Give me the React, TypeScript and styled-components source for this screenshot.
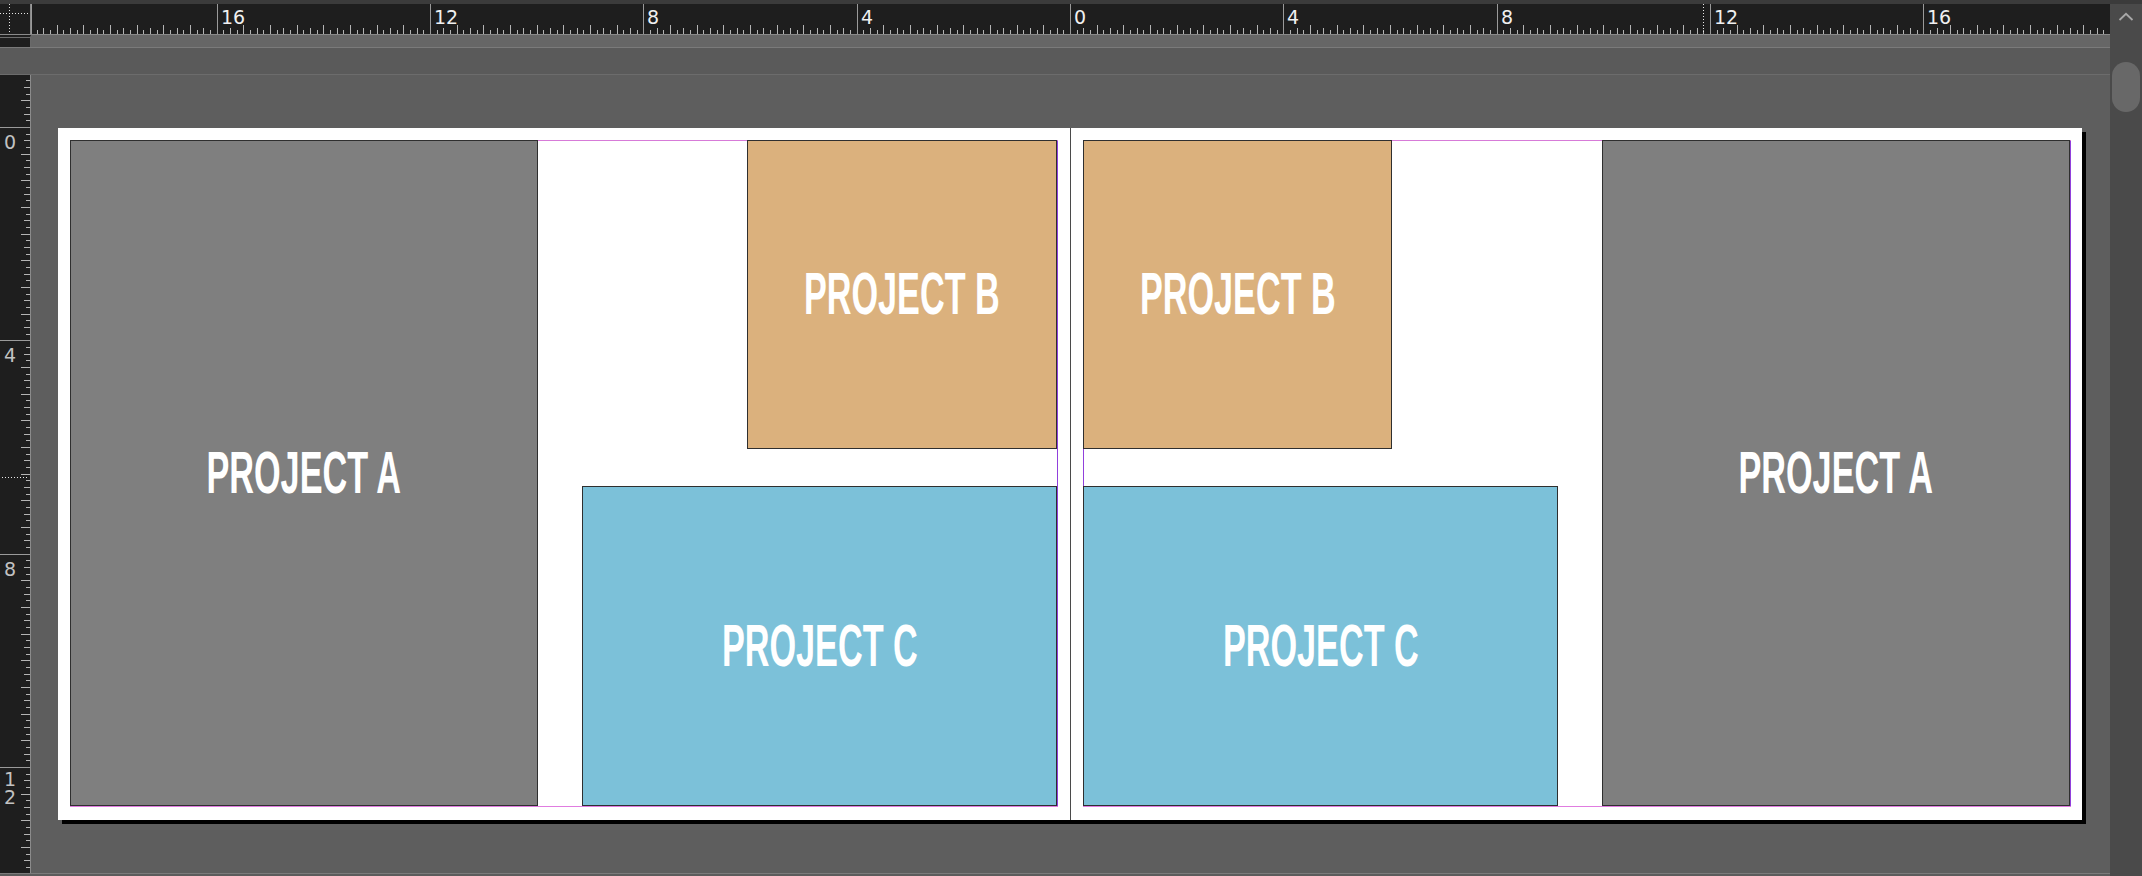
import React from "react";
import styled, { createGlobalStyle } from "styled-components";

const UNIT = 160 / 3;
const EIGHTH = UNIT / 8;
const H_RULER_W = 2079;
const H_ZERO = 1039;
const V_RULER_H = 798;
const V_ZERO = 52;

const GlobalStyle = createGlobalStyle`
  html, body { margin: 0; padding: 0; background: #5e5e5e; overflow: hidden; }
  #root { width: 2142px; height: 876px; }
  * { box-sizing: border-box; }
`;

const Window = styled.div`
  width: 2142px;
  height: 876px;
  display: flex;
  background: #5e5e5e;
  overflow: hidden;
  font-family: "DejaVu Sans", "Liberation Sans", sans-serif;
`;

const Workspace = styled.div`
  width: 2110px;
  height: 876px;
  display: flex;
  flex-direction: column;
`;

const TopStrip = styled.div`
  flex: none;
  height: 4px;
  background: #3b3b3b;
`;

const RulerRow = styled.div`
  flex: none;
  height: 31px;
  display: flex;
  border-bottom: 1px solid #8a8a8a;
`;

const Corner = styled.div`
  position: relative;
  flex: none;
  width: 31px;
  background: #1e1e1e;
  border-right: 1px solid #8a8a8a;
`;

const DotLineV = styled.div`
  position: absolute;
  width: 1px;
  background: repeating-linear-gradient(to bottom, #e8e8e8 0 1px, transparent 1px 3px);
`;

const DotLineH = styled.div`
  position: absolute;
  height: 1px;
  background: repeating-linear-gradient(to right, #e8e8e8 0 1px, transparent 1px 3px);
`;

const HRuler = styled.div`
  position: relative;
  flex: 1;
  background: #1e1e1e;
  overflow: hidden;
`;

const HLabel = styled.span`
  position: absolute;
  top: 4px;
  font-size: 19px;
  line-height: 19px;
  color: #f0f0f0;
  white-space: nowrap;
`;

const InfoStrip = styled.div`
  flex: none;
  height: 13px;
  display: flex;
  border-bottom: 1px solid #7a7a7a;
`;

const InfoCorner = styled.div`
  flex: none;
  width: 31px;
  background: #1e1e1e;
  border-right: 1px solid #6a6a6a;
  border-top: 2px solid #1e1e1e;
  box-shadow: inset 0 1px 0 #6e6e6e;
`;

const InfoFill = styled.div`
  flex: 1;
  background: #666666;
`;

const ToolBand = styled.div`
  flex: none;
  height: 27px;
  background: #5a5a5a;
  border-bottom: 1px solid #6c6c6c;
`;

const Body = styled.div`
  flex: 1;
  display: flex;
  min-height: 0;
`;

const VRuler = styled.div`
  position: relative;
  flex: none;
  width: 31px;
  background: #1e1e1e;
  border-right: 1px solid #8a8a8a;
  overflow: hidden;
`;

const VLabel = styled.span<{ $stacked?: boolean }>`
  position: absolute;
  left: 4px;
  display: flex;
  flex-direction: column;
  font-size: 19px;
  line-height: ${(p) => (p.$stacked ? "18px" : "19px")};
  color: #c2c2c2;
`;

const Canvas = styled.div`
  flex: 1;
  padding: 53px 0 0 27px;
  background: #5e5e5e;
`;

const Spread = styled.div`
  display: flex;
  width: 2024px;
  height: 692px;
  background: #ffffff;
  box-shadow: 4px 4px 0 #000000;
`;

const Page = styled.div<{ $side: "left" | "right" }>`
  width: 1012px;
  height: 692px;
  padding: ${(p) => (p.$side === "left" ? "12px 12px 13px 12px" : "12px 11px 13px 12px")};
  border-left: ${(p) => (p.$side === "right" ? "1px solid #4a4a4a" : "none")};
`;

const MarginGrid = styled.div<{ $side: "left" | "right" }>`
  width: 988px;
  height: 667px;
  display: grid;
  grid-template-rows: 309px 37px 320px 1px;
  grid-template-columns: ${(p) =>
    p.$side === "left" ? "468px 44px 165px 310px 1px" : "309px 166px 44px 468px 1px"};
  grid-template-areas: ${(p) =>
    p.$side === "left"
      ? `"a . . b ." "a . . . ." "a . c c ." ". . . . ."`
      : `"b . . a ." ". . . a ." "c c . a ." ". . . . ."`};
  box-shadow: inset 0 1px 0 #d77bd8, inset 0 -1px 0 #e07ce0, inset 1px 0 0 #9140dc,
    inset -1px 0 0 #9140dc;
`;

const TONES = {
  gray: "#7f7f7f",
  tan: "#dbb17d",
  blue: "#7cc1d9",
};

const Frame = styled.div<{ $area: string; $tone: keyof typeof TONES }>`
  grid-area: ${(p) => p.$area};
  background: ${(p) => TONES[p.$tone]};
  border: 1px solid #2f2f2f;
  display: flex;
  align-items: center;
  justify-content: center;
  overflow: hidden;
`;

const FrameLabel = styled.span`
  display: inline-block;
  font-family: "Liberation Sans", Arial, sans-serif;
  font-weight: 700;
  font-size: 59px;
  line-height: 1;
  color: #ffffff;
  white-space: nowrap;
  transform: scaleX(0.58);
`;

const BottomStrip = styled.div`
  flex: none;
  height: 3px;
  background: #5c5c5c;
  border-top: 1px solid #7b7b7b;
`;

const Scrollbar = styled.div`
  flex: none;
  width: 32px;
  height: 876px;
  display: flex;
  flex-direction: column;
  align-items: center;
  background: #4a4a4a;
  border-top: 4px solid #3b3b3b;
`;

const ScrollButton = styled.div`
  height: 26px;
  width: 32px;
  display: flex;
  align-items: flex-start;
  justify-content: center;
  padding-top: 8px;
`;

const ScrollThumb = styled.div`
  margin-top: 32px;
  width: 28px;
  height: 50px;
  border-radius: 14px;
  background: #686868;
`;

function HRulerTicks() {
  const ticks: React.ReactNode[] = [];
  const labels: React.ReactNode[] = [];
  const minE = Math.ceil(-H_ZERO / EIGHTH);
  const maxE = Math.floor((H_RULER_W - H_ZERO) / EIGHTH);
  for (let e = minE; e <= maxE; e++) {
    const x = Math.round(H_ZERO + e * EIGHTH) + 0.5;
    let len = 4;
    if (e % 32 === 0) len = 30;
    else if (e % 4 === 0) len = 9;
    else if (e % 2 === 0) len = 6;
    ticks.push(
      <line key={e} x1={x} x2={x} y1={30 - len} y2={30} stroke={len === 30 ? "#9a9a9a" : "#b4b4b4"} />
    );
    if (e % 32 === 0) {
      labels.push(
        <HLabel key={"l" + e} style={{ left: Math.round(H_ZERO + e * EIGHTH) + 4 }}>
          {Math.abs(e / 8)}
        </HLabel>
      );
    }
  }
  return (
    <>
      <svg width={H_RULER_W} height={30} style={{ display: "block" }} shapeRendering="crispEdges">
        <line x1={0.5} x2={0.5} y1={0} y2={30} stroke="#9a9a9a" />
        {ticks}
      </svg>
      {labels}
      <DotLineV style={{ left: 1672, top: 0, height: 30 }} />
    </>
  );
}

function VRulerTicks() {
  const ticks: React.ReactNode[] = [];
  const labels: React.ReactNode[] = [];
  const minE = Math.ceil(-V_ZERO / EIGHTH);
  const maxE = Math.floor((V_RULER_H - V_ZERO) / EIGHTH);
  for (let e = minE; e <= maxE; e++) {
    const y = Math.round(V_ZERO + e * EIGHTH) + 0.5;
    let len = 4;
    if (e % 32 === 0) len = 30;
    else if (e % 4 === 0) len = 9;
    else if (e % 2 === 0) len = 6;
    ticks.push(
      <line key={e} y1={y} y2={y} x1={30 - len} x2={30} stroke={len === 30 ? "#9a9a9a" : "#b4b4b4"} />
    );
    if (e % 32 === 0) {
      const n = String(e / 8);
      const stacked = n.length > 1;
      labels.push(
        <VLabel
          key={"l" + e}
          $stacked={stacked}
          style={{ top: Math.round(V_ZERO + e * EIGHTH) + (stacked ? 3 : 6) }}
        >
          {n.split("").map((d, i) => (
            <span key={i}>{d}</span>
          ))}
        </VLabel>
      );
    }
  }
  return (
    <>
      <svg width={30} height={V_RULER_H} style={{ display: "block" }} shapeRendering="crispEdges">
        {ticks}
      </svg>
      {labels}
      <DotLineH style={{ top: 402, left: 2, width: 27 }} />
    </>
  );
}

type Side = "left" | "right";
const FRAMES: { area: string; tone: keyof typeof TONES; label: string }[] = [
  { area: "a", tone: "gray", label: "PROJECT A" },
  { area: "b", tone: "tan", label: "PROJECT B" },
  { area: "c", tone: "blue", label: "PROJECT C" },
];

function LayoutPage({ side }: { side: Side }) {
  return (
    <Page $side={side}>
      <MarginGrid $side={side}>
        {FRAMES.map((f) => (
          <Frame key={f.area} $area={f.area} $tone={f.tone}>
            <FrameLabel>{f.label}</FrameLabel>
          </Frame>
        ))}
      </MarginGrid>
    </Page>
  );
}

export default function App() {
  return (
    <>
      <GlobalStyle />
      <Window>
        <Workspace>
          <TopStrip />
          <RulerRow>
            <Corner>
              <DotLineV style={{ left: 9, top: 0, height: 30 }} />
              <DotLineH style={{ left: 0, top: 9, width: 30 }} />
            </Corner>
            <HRuler>
              <HRulerTicks />
            </HRuler>
          </RulerRow>
          <InfoStrip>
            <InfoCorner />
            <InfoFill />
          </InfoStrip>
          <ToolBand />
          <Body>
            <VRuler>
              <VRulerTicks />
            </VRuler>
            <Canvas>
              <Spread>
                <LayoutPage side="left" />
                <LayoutPage side="right" />
              </Spread>
            </Canvas>
          </Body>
          <BottomStrip />
        </Workspace>
        <Scrollbar>
          <ScrollButton>
            <svg width="16" height="9" viewBox="0 0 16 9">
              <polyline points="1.5,8 8,1.8 14.5,8" fill="none" stroke="#a8a8a8" strokeWidth="1.8" />
            </svg>
          </ScrollButton>
          <ScrollThumb />
        </Scrollbar>
      </Window>
    </>
  );
}
